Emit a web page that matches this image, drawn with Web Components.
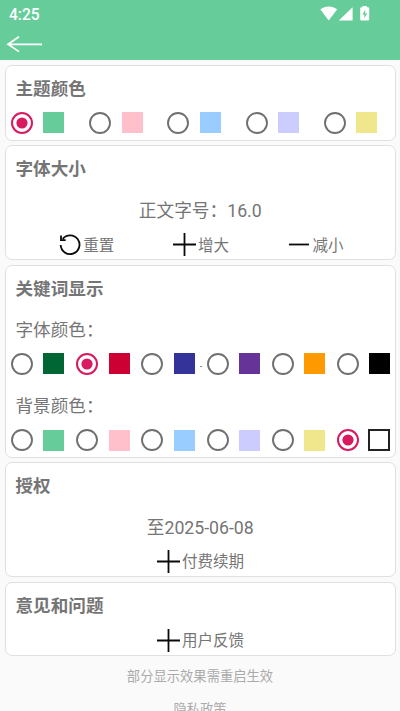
<!DOCTYPE html>
<html lang="zh-CN">
<head>
<meta charset="utf-8">
<title>设置</title>
<style>
html,body{margin:0;height:100%;overflow:hidden;background:#fafafa}
body{font-family:Roboto,"Noto Sans CJK SC",sans-serif;color:#757575}
</style>
</head>
<body>
<settings-page></settings-page>
<script>
const define = (name, render) => customElements.define(name, class extends HTMLElement {
  constructor() {
    super();
    this.attachShadow({ mode: 'open' });
  }
  connectedCallback() { this.shadowRoot.innerHTML = render(this); }
});

define('app-header', () => `
<style>
:host{display:flex;flex-direction:column;height:60px;background:#66cd9a;color:#fff}
.status{display:flex;height:28px;align-items:center;padding-left:9px;font:500 15.6px/28px Roboto,sans-serif}
.status span{padding-top:2px}
.status svg{margin-left:auto;margin-right:30px;display:block}
.nav{display:flex;height:32px;align-items:center;padding-left:6px}
</style>
<div class="status"><span>4:25</span>
<svg width="50" height="17" viewBox="320 5.5 50 17" fill="#fff">
<path d="M320.3 8.8C325 4.9 332.5 4.9 337.2 8.8L328.7 20Z"/>
<path d="M352.6 6.8V20H338.8Z"/>
<path fill-rule="evenodd" d="M362.6 5.6h4.2v1.2h1.2q1.2 0 1.2 1.2v11q0 1.1-1.2 1.1h-6.6q-1.2 0-1.2-1.1V8q0-1.2 1.2-1.2h1.2zM365.3 9.6l-3 4.5h2v3.3l3-4.4h-2z"/>
</svg></div>
<div class="nav"><svg width="37" height="20" viewBox="6 34 37 20" fill="none" stroke="#fff" stroke-width="1.7"><path d="M42 44.3H8M19 36.8L8 44.3L19 51.6"/></svg></div>`);

define('settings-card', el => `
<style>
:host{display:block;box-sizing:border-box;border:1.5px solid #e0e0e0;border-radius:7px;background:#fff}
h2{margin:0;height:45px;padding-left:9.5px;font-size:17.6px;line-height:47px;font-weight:700}
</style>
<h2>${el.getAttribute('heading')}</h2><slot></slot>`);

define('text-line', () => `
<style>
:host{display:block;height:36px;line-height:40px;font-size:17.7px;text-align:center}
:host([label]){text-align:left;padding-left:9.5px;line-height:38px;font-size:17.6px}
</style><slot></slot>`);

define('color-option', el => `
<style>
:host{display:flex;align-items:center;gap:10.4px;width:53.8px}
svg{display:block;flex:none}
i{display:block;box-sizing:border-box;width:21px;height:21px;flex:none;background:${el.getAttribute('color')}}
:host([outlined]) i{border:2px solid #222;width:22px;height:22px;margin-left:-1px}
</style>
<svg width="22" height="22" viewBox="0 0 22 22">${el.hasAttribute('checked')
  ? '<circle cx="11" cy="11" r="10" fill="none" stroke="#d81b60" stroke-width="2"/><circle cx="11" cy="11" r="5.6" fill="#d81b60"/>'
  : '<circle cx="11" cy="11" r="10" fill="none" stroke="#707070" stroke-width="1.9"/>'}</svg><i></i>`);

define('color-row', el => {
  const checked = Number(el.getAttribute('checked'));
  return `
<style>
:host{display:grid;grid-auto-flow:column;grid-auto-columns:${el.getAttribute('pitch')}px;height:34px;align-items:center;padding-left:5px}
</style>
${el.getAttribute('colors').split(' ').map((c, i) =>
  `<color-option color="${c}" ${i === checked ? 'checked' : ''} ${c === '#ffffff' ? 'outlined' : ''}></color-option>`).join('')}`;
});

const icons = {
  plus: '<path d="M1 11.5H24M12.5 0V23"/>',
  minus: '<path d="M2 11.5H22"/>',
  reset: '<path d="M2.7 12A9.4 9.4 0 1 0 4.7 5.9M3 2.6V7.1H7.7"/>'
};
define('action-item', el => `
<style>
:host{display:flex;align-items:center;gap:1.5px;font-size:15.5px;line-height:32px}
svg{display:block;fill:none;stroke:#0a0a0a;stroke-width:1.8;overflow:visible}
span{padding-top:1px}
</style>
<svg width="24" height="24" viewBox="0 0 24 24">${icons[el.getAttribute('icon')]}</svg><span><slot></slot></span>`);

define('action-row', () => `
<style>
:host{display:flex;height:32px;align-items:center;justify-content:center;padding-top:1.5px}
:host([spread]){display:grid;grid-template-columns:114.8px 114.4px auto;justify-content:start;padding-left:51.7px}
</style><slot></slot>`);

define('foot-note', () => `
<style>:host{display:block;height:33px;line-height:33px;font-size:13.3px;text-align:center;color:#aaa}</style><slot></slot>`);

define('settings-page', () => `
<style>
:host{display:block;height:711px;overflow:hidden;background:#fafafa}
main{display:grid;grid-template-columns:minmax(0,1fr);grid-template-rows:76px 114.5px 193px 115px 74px;row-gap:4.7px;padding:4.8px 4.5px 0 5px}
.first{margin-top:-5px}
.feedback{margin-top:-5px}
.mark{position:absolute;left:199.5px;top:366px;width:2px;height:1px;background:#659b9b}
footer{padding-top:4px}
</style>
<app-header></app-header>
<main>
<settings-card heading="主题颜色"><color-row class="first" pitch="78.2" checked="0" colors="#66cd9a #ffc0cb #99ccff #ccccff #f0e68c"></color-row></settings-card>
<settings-card heading="字体大小"><text-line>正文字号：16.0</text-line>
<action-row spread><action-item icon="reset">重置</action-item><action-item icon="plus">增大</action-item><action-item icon="minus">减小</action-item></action-row></settings-card>
<settings-card heading="关键词显示"><text-line label>字体颜色：</text-line>
<color-row pitch="65.2" checked="1" colors="#006633 #cc0033 #333399 #663399 #ff9900 #000000"></color-row>
<text-line label style="margin-top:6.5px">背景颜色：</text-line>
<color-row pitch="65.2" checked="5" colors="#66cd9a #ffc0cb #99ccff #ccccff #f0e68c #ffffff"></color-row></settings-card>
<settings-card heading="授权"><text-line>至2025-06-08</text-line><action-row><action-item icon="plus">付费续期</action-item></action-row></settings-card>
<settings-card heading="意见和问题"><action-row class="feedback"><action-item icon="plus">用户反馈</action-item></action-row></settings-card>
</main>
<footer><foot-note>部分显示效果需重启生效</foot-note><foot-note>隐私政策</foot-note></footer>
<div class="mark"></div>`);
</script>
</body>
</html>
